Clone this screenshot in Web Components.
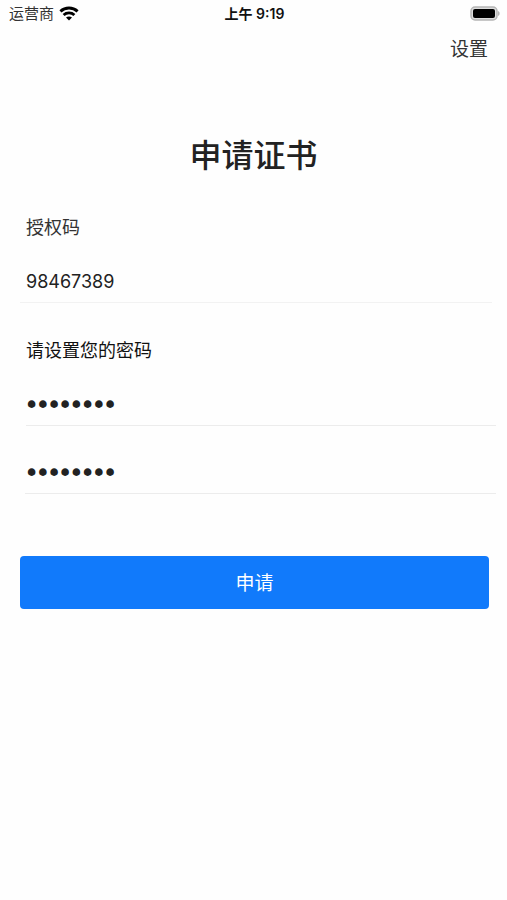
<!DOCTYPE html>
<html lang="zh-CN">
<head>
<meta charset="utf-8">
<meta name="viewport" content="width=device-width, initial-scale=1">
<title>申请证书</title>
<style>
  body {
    margin: 0;
    background: #fefefe;
    color: #222;
    font-family: Inter, "Noto Sans CJK SC", sans-serif;
  }
</style>
</head>
<body>
<certificate-page></certificate-page>

<script>
  class ShadowElement extends HTMLElement {
    constructor() {
      super();
      this.attachShadow({ mode: "open" }).innerHTML = this.template();
    }
  }

  customElements.define("status-bar", class extends ShadowElement {
    template() {
      return `
        <style>
          :host {
            display: grid;
            grid-template-columns: 1fr auto 1fr;
            align-items: center;
            height: 28px;
            padding: 0 7px 0 9px;
            font-size: 15px;
            line-height: 20px;
          }
          .carrier { display: flex; align-items: center; gap: 5px; color: #333; }
          .time { font-size: 14px; font-weight: 600; color: #111; }
          .battery { justify-self: end; }
          svg { display: block; }
        </style>
        <div class="carrier">
          <slot name="carrier"></slot>
          <svg width="20" height="16" viewBox="0 0 20 16" fill="none" stroke="#000" stroke-width="2.9" aria-hidden="true">
            <path d="M1.4 5.4C6.3 .9 13.7 .9 18.6 5.4"/>
            <path d="M4.6 9C7.7 6.2 12.3 6.2 15.4 9"/>
            <path d="M7 11.6C8.7 10.1 11.3 10.1 13 11.6L10 14.5Z" fill="#000" stroke="none"/>
          </svg>
        </div>
        <div class="time"><slot name="time"></slot></div>
        <svg class="battery" width="30" height="16" viewBox="0 0 30 16" aria-hidden="true">
          <rect x="1" y="1" width="26" height="13" rx="4" fill="#ddd" stroke="#b5b5b5" stroke-width="1.5"/>
          <rect x="3" y="3" width="22" height="9" rx="2" fill="#000"/>
          <path d="M28 5C30.2 6 30.2 9 28 10Z" fill="#b5b5b5"/>
        </svg>`;
    }
  });

  customElements.define("nav-bar", class extends ShadowElement {
    template() {
      return `
        <style>
          :host { display: flex; justify-content: flex-end; padding: 8px 19px 0; }
          button {
            border: 0; padding: 0; background: none; color: #333;
            font: inherit; font-size: 19px; line-height: 28px;
          }
        </style>
        <button type="button"><slot></slot></button>`;
    }
  });

  customElements.define("form-field", class extends ShadowElement {
    template() {
      const type = this.getAttribute("type") || "text";
      const value = this.getAttribute("value") || "";
      const label = this.getAttribute("label");
      const hint = this.getAttribute("hint");
      return `
        <style>
          :host { display: block; color: #222; }
          label {
            display: block; padding: 0 0 18px 6px;
            font-size: 18px; line-height: 28px;
            color: var(--label-color, #333);
          }
          .line {
            margin-left: var(--line-start, 0);
            margin-right: var(--line-end, 0);
            border-bottom: 1px solid var(--line-color, #ececec);
          }
          input {
            display: block; box-sizing: border-box; width: 100%; height: 42px;
            margin: 0; padding: 0 0 0 calc(6px - var(--line-start, 0px));
            border: 0; outline: 0; background: none; color: inherit;
            font: inherit; font-size: 18px;
          }
          input[type="password"] {
            font-family: "DejaVu Sans", sans-serif; font-size: 19px;
            -webkit-text-stroke: 2px currentColor;
          }
        </style>
        ${label ? `<label for="field">${label}</label>` : ""}
        <div class="line">
          <input id="field" type="${type}" value="${value}"${hint ? ` aria-label="${hint}"` : ""}>
        </div>`;
    }
  });

  customElements.define("primary-button", class extends ShadowElement {
    template() {
      return `
        <style>
          :host { display: block; }
          button {
            display: block; width: 100%; height: 53px; padding: 2px 0 0;
            border: 0; border-radius: 4px; background: #117afb; color: #fff;
            font: inherit; font-size: 19px; line-height: 28px;
          }
        </style>
        <button type="button"><slot></slot></button>`;
    }
  });

  customElements.define("certificate-page", class extends ShadowElement {
    template() {
      return `
        <style>
          :host { display: block; min-height: 100vh; }
          h1 {
            margin: 69px 0 0; text-align: center;
            font-size: 32px; line-height: 46px; font-weight: 500; color: #222;
          }
          form { display: block; margin: 0; padding: 35px 18px 0 20px; }
          .code { --line-end: -3px; --line-color: #f2f2f2; }
          .password {
            --line-start: 6px; --line-end: -7px;
            --label-color: #111;
            margin-top: 34px;
          }
          .confirm { --line-start: 5px; --line-end: -7px; margin-top: 25px; }
          primary-button { margin-top: 62px; }
        </style>
        <status-bar>
          <span slot="carrier">运营商</span>
          <span slot="time">上午 9:19</span>
        </status-bar>
        <nav-bar>设置</nav-bar>
        <main>
          <h1>申请证书</h1>
          <form>
            <form-field class="code" label="授权码" value="98467389"></form-field>
            <form-field class="password" type="password" label="请设置您的密码" value="12345678"></form-field>
            <form-field class="confirm" type="password" hint="确认密码" value="12345678"></form-field>
            <primary-button>申请</primary-button>
          </form>
        </main>`;
    }
  });
</script>
</body>
</html>
